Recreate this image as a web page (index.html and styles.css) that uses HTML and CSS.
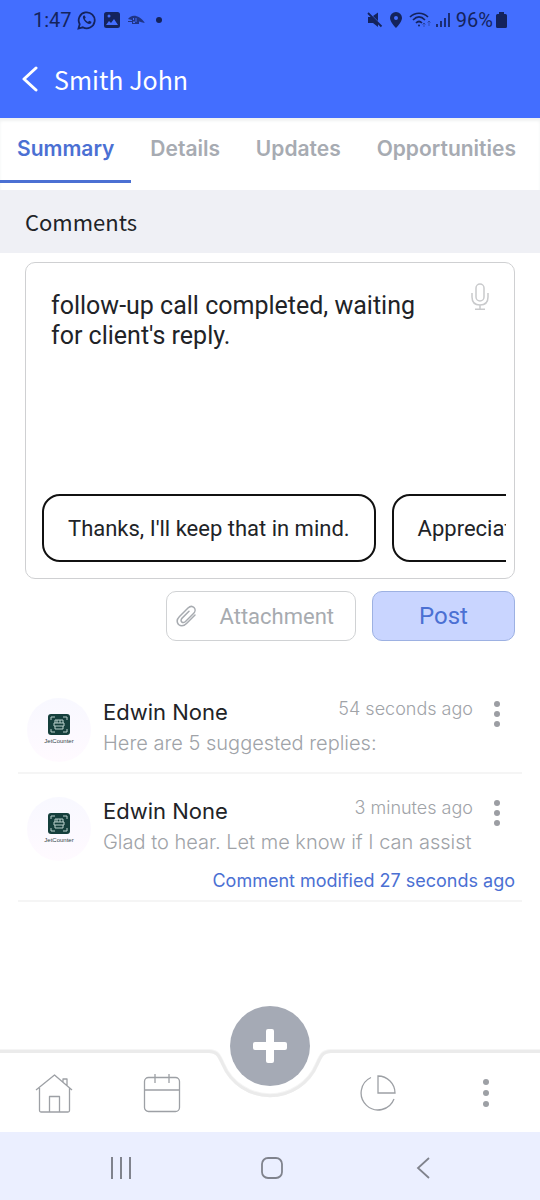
FILE: index.html
```html
<!DOCTYPE html>
<html lang="en">
<head>
<meta charset="utf-8">
<meta name="viewport" content="width=device-width, initial-scale=1">
<title>Smith John</title>
<link rel="stylesheet" href="styles.css">
</head>
<body>
<div class="app">
  <header class="top">
    <div class="status">
      <span class="clock">1:47</span>
      <svg class="whatsapp" width="20" height="20" viewBox="0 0 20 20" fill="none" stroke="currentColor" stroke-width="1.8"><path d="M1.5 18.5l1.2-4.3a8 8 0 1 1 3.1 3.1z"/><path d="M6.8 5.5c-1.300 1-1.200 2.600.4 4.900 1.900 2.700 4.300 4 6 3.400 1-.4 1.300-1.200 1.200-2l-2.300-1.100-1.100 1.200c-1.500-.6-2.600-1.800-3.200-3.100l.9-1-.9-2.200z" fill="currentColor" stroke="none"/></svg>
      <svg width="16" height="16" viewBox="0 0 16 16"><path fill="currentColor" fill-rule="evenodd" d="M2.500 0h11A2.500 2.500 0 0 1 16 2.500v11a2.500 2.500 0 0 1-2.500 2.500h-11A2.500 2.500 0 0 1 0 13.500v-11A2.500 2.500 0 0 1 2.500 0zM2 13h12l-4-6-3 4-2-2zM3.500 4a1.500 1.500 0 1 0 3 0 1.500 1.500 0 1 0-3 0z"/></svg>
      <svg width="18" height="12" viewBox="0 0 18 12"><path fill="currentColor" opacity=".75" fill-rule="evenodd" d="M1 5C4 0 12 0 18 9L12 7.500V10H5V8H1V7h4V6zM6 4v2h1V4zM8.500 4v4h1V4zM6 7.500V9h2V7.500z"/></svg>
      <svg class="more-dot" width="6" height="6" viewBox="0 0 6 6"><circle cx="3" cy="3" r="3" fill="currentColor"/></svg>
      <span class="spacer"></span>
      <svg width="16" height="16" viewBox="0 0 16 16"><path fill="currentColor" d="M1 5h4l6 6v4l-5-4H1zM6 4l5-3.500V9z"/><path d="M1 1l13.500 13.500" stroke="currentColor" stroke-width="1.800"/></svg>
      <svg width="12" height="16" viewBox="0 0 12 16"><path fill="currentColor" fill-rule="evenodd" d="M6 0a6 6 0 0 1 6 6c0 4-6 10-6 10S0 10 0 6a6 6 0 0 1 6-6zM4 6a2 2 0 1 0 4 0 2 2 0 1 0-4 0z"/></svg>
      <svg class="wifi" width="22" height="16" viewBox="0 0 22 16" fill="none" stroke="currentColor" stroke-width="1.700"><path d="M1 5c5-5 13-5 18 0M4 8c4-4 8-4 12 0M7 11c2-2 4-2 6 0"/><circle cx="10" cy="13.500" r="1" fill="currentColor" stroke="none"/><path d="M15 15v-4M20 9v5M13.500 12.500L15 11l1.500 1.500M18.500 10.500L20 9l1.500 1.500" stroke-width="1" opacity=".45"/></svg>
      <svg width="14" height="16" viewBox="0 0 14 16"><path stroke="currentColor" stroke-width="1.700" d="M1 12v3M5 9v6M9 6v9M13 1v14"/></svg>
      <span class="battery-text">96%</span>
      <svg width="11" height="16" viewBox="0 0 11 16"><path fill="currentColor" d="M3 0h5v2h1.500A1.500 1.500 0 0 1 11 3.500v11A1.500 1.500 0 0 1 9.500 16h-8A1.500 1.500 0 0 1 0 14.500v-11A1.500 1.500 0 0 1 1.500 2H3z"/></svg>
    </div>
    <div class="title-bar">
      <button class="icon-button back" aria-label="Back"><svg width="16" height="26" viewBox="0 0 16 26" fill="none" stroke="currentColor" stroke-width="3" stroke-linecap="round" stroke-linejoin="round"><path d="M14 2L2 13l12 11"/></svg></button>
      <h1>Smith John</h1>
    </div>
  </header>

  <nav class="tabs" aria-label="Sections">
    <a class="tab active" href="#summary" aria-current="page">Summary</a>
    <a class="tab" href="#details">Details</a>
    <a class="tab" href="#updates">Updates</a>
    <a class="tab" href="#opportunities">Opportunities</a>
  </nav>

  <main id="summary">
    <h2 class="section-title"><label for="comment">Comments</label></h2>
    <form class="composer">
      <div class="editor">
        <div class="entry">
          <textarea id="comment">follow-up call completed, waiting for client's reply.</textarea>
          <button type="button" class="icon-button mic" aria-label="Dictate"><svg width="18" height="28" viewBox="0 0 18 28" fill="none" stroke="currentColor" stroke-width="1.500"><rect x="5" y="1" width="8" height="17" rx="4"/><path d="M1 10v4c0 5 3 8 8 8s8-3 8-8v-4M9 22v4M4 26.200h10"/></svg></button>
        </div>
        <div class="replies">
          <button type="button" class="reply">Thanks, I'll keep that in mind.</button>
          <button type="button" class="reply">Appreciate it.</button>
        </div>
      </div>
      <div class="actions">
        <button type="button" class="action attach"><svg width="22" height="22" viewBox="0 0 22 22" fill="none" stroke="currentColor" stroke-width="1.500" stroke-linecap="round"><path d="M20 10l-8.500 8.500c-2.500 2.500-5.500 3-8 1-2-2.500-1.500-5.500 1-8L13 3c2-2 4.500-2 6-.5s1.500 4-.5 6l-8 8c-1.200 1.200-2.800 1.400-3.800.4s-.8-2.600.4-3.800L14 6.200"/></svg><span>Attachment</span></button>
        <button type="button" class="action post">Post</button>
      </div>
    </form>

    <ul class="comments">
      <li class="comment">
        <svg class="avatar" width="64" height="64" viewBox="0 0 64 64"><defs><linearGradient id="disc" x1="0" y1="0" x2="0" y2="1"><stop offset="0" stop-color="#f8f8ff"/><stop offset="1" stop-color="#fffaff"/></linearGradient></defs><circle cx="32" cy="32" r="32" fill="url(#disc)"/><g id="jet"><rect x="21" y="16" width="22" height="21" rx="3" fill="#153f3c"/><path d="M24 22v-3h4M36 19h4v3M24 31v3h4M36 34h4v-3" fill="none" stroke="#b9cfca"/><path d="M28 22h8v3h1v3h-1v3h-8v-3h-1v-3h1zM28 25h8M28 28h8M30 22v3M33 22v3" fill="none" stroke="#b9cfca"/></g><text x="32" y="45" class="brand">JetCounter</text></svg>
        <div class="body">
          <div class="meta"><h3>Edwin None</h3><time>54 seconds ago</time></div>
          <p>Here are 5 suggested replies:</p>
        </div>
        <button class="icon-button kebab" aria-label="Comment options"><svg width="6" height="26" viewBox="0 0 6 26" fill="currentColor"><circle cx="3" cy="3" r="3"/><circle cx="3" cy="13" r="3"/><circle cx="3" cy="23" r="3"/></svg></button>
      </li>
      <li class="comment">
        <svg class="avatar" width="64" height="64" viewBox="0 0 64 64"><circle cx="32" cy="32" r="32" fill="url(#disc)"/><use href="#jet"/><text x="32" y="45" class="brand">JetCounter</text></svg>
        <div class="body">
          <div class="meta"><h3>Edwin None</h3><time>3 minutes ago</time></div>
          <p>Glad to hear. Let me know if I can assist</p>
        </div>
        <button class="icon-button kebab" aria-label="Comment options"><svg width="6" height="26" viewBox="0 0 6 26" fill="currentColor"><circle cx="3" cy="3" r="3"/><circle cx="3" cy="13" r="3"/><circle cx="3" cy="23" r="3"/></svg></button>
        <div class="modified">Comment modified 27 seconds ago</div>
      </li>
    </ul>
  </main>

  <footer class="bottom">
    <nav class="dock" aria-label="Main">
      <a href="#home" aria-label="Home"><svg width="38" height="40" viewBox="0 0 38 40" fill="none" stroke="currentColor" stroke-width="1.300" stroke-linejoin="round"><path d="M1 17L19.500 2 37 17M4.500 15v22.500a1.500 1.500 0 0 0 1.500 1.500h27a1.500 1.500 0 0 0 1.500-1.500V15M14.500 39V23.500h10V39M28 9V6h4v7"/></svg></a>
      <a href="#calendar" aria-label="Calendar"><svg width="38" height="40" viewBox="0 0 38 40" fill="none" stroke="currentColor" stroke-width="1.300"><rect x="1.500" y="4.500" width="35" height="34" rx="4"/><path d="M2 17h34.500M12 1v9M26 1v9"/></svg></a>
      <div class="centre">
        <svg class="notch" width="140" height="64" viewBox="0 0 140 64" fill="none"><path d="M8 8H132V15H8z" fill="#fff"/><path d="M0 12H9C17 12 19 16 23 25A51 51 0 0 0 117 25C121 16 123 12 131 12H140" stroke="#f5f5f5" stroke-width="4"/><path d="M0 12.500H9C17 12.500 19 16.500 23 25.500A51 51 0 0 0 117 25.500C121 16.500 123 12.500 131 12.500H140" stroke="#ebebeb" stroke-width="3"/></svg>
        <button class="add" aria-label="Add"><svg width="34" height="34" viewBox="0 0 34 34" fill="#fff"><rect y="13" width="34" height="8" rx="2"/><rect x="13" width="8" height="34" rx="2"/></svg></button>
      </div>
      <a href="#reports" aria-label="Reports"><svg width="36" height="36" viewBox="0 0 36 36" fill="none" stroke="currentColor" stroke-width="1.300"><path d="M11 2.500A17 17 0 1 0 34 24M18 1v17h17A17 17 0 0 0 18 1z"/></svg></a>
      <a href="#more" aria-label="More"><svg width="6" height="28" viewBox="0 0 6 28" fill="currentColor"><circle cx="3" cy="3" r="3"/><circle cx="3" cy="14" r="3"/><circle cx="3" cy="25" r="3"/></svg></a>
    </nav>
    <div class="system">
      <button class="icon-button" aria-label="Recent apps"><svg width="22" height="22" viewBox="0 0 22 22" stroke="currentColor" stroke-width="2"><path d="M2 0v22M11 0v22M20 0v22"/></svg></button>
      <button class="icon-button" aria-label="Home screen"><svg width="22" height="22" viewBox="0 0 22 22" fill="none" stroke="currentColor" stroke-width="1.800"><rect x="1" y="1" width="20" height="20" rx="6"/></svg></button>
      <button class="icon-button" aria-label="System back"><svg width="22" height="22" viewBox="0 0 22 22" fill="none" stroke="currentColor" stroke-width="1.800"><path d="M17 1L6 11l11 10"/></svg></button>
    </div>
  </footer>
</div>
</body>
</html>
```
FILE: styles.css
```css
* { box-sizing: border-box; }
body, h1, h2, h3, p, ul { margin: 0; padding: 0; }
body { background: #fff; font-family: Roboto, sans-serif; color: #212327; }
button, textarea { font: inherit; color: inherit; }
button { cursor: pointer; }
a { color: inherit; text-decoration: none; }
svg { display: block; flex: none; }
h1, h2, h3 { font-weight: 400; }
.icon-button { display: flex; border: 0; padding: 0; background: none; }
.app { display: flex; flex-direction: column; min-height: 100vh; }
main { flex: 1; }

.top { background: #436eff; color: #fff; }
.status { display: flex; align-items: center; gap: 7px; height: 40px; padding: 0 33px; color: #14235c; font-size: 20px; }
.clock { margin-right: -2px; }
.spacer { flex: 1; }
.wifi { margin-right: -2px; }
.more-dot { margin-left: 4px; }
.battery-text { margin: 0 -4px 0 -1px; }
.title-bar { display: flex; align-items: center; gap: 16px; height: 78px; padding: 0 22px; }
.title-bar h1 { font-family: "Noto Sans CJK JP", sans-serif; font-size: 25px; line-height: 36px; }

.tabs { display: flex; justify-content: space-between; height: 72px; padding-right: 7px; box-shadow: inset 0 3px 3px #f0f2f2; }
.tab { height: 65px; padding: 19px 17px 0; font: 600 21px/24px Inter, sans-serif; color: #a7abb2; }
.tab.active { color: #4b70d3; border-bottom: 3px solid #4b70d3; }

.section-title { background: #eff0f5; padding: 16px 25px; font: 22px/31px "Noto Sans CJK JP", sans-serif; }
.composer { padding: 9px 25px 0; }
.editor { border: 1px solid #cfd0d2; border-radius: 10px; padding: 20px 8px 16px 16px; }
.entry { display: flex; align-items: flex-start; justify-content: space-between; padding-right: 17px; }
.entry textarea { flex: 1; min-width: 0; height: 211px; border: 0; outline: 0; resize: none; padding: 8px 40px 8px 9px; font-size: 25px; line-height: 30px; background: none; }
.mic { color: #c9cacc; }
.replies { display: flex; gap: 16px; overflow: hidden; }
.reply { flex: none; height: 68px; padding: 0 24px; border: 2px solid #111; border-radius: 18px; background: #fff; font-size: 22px; }
.actions { display: flex; justify-content: flex-end; gap: 16px; padding-top: 12px; }
.action { height: 50px; border: 1px solid #d0d2d4; border-radius: 10px; background: #fff; }
.attach { display: flex; align-items: center; gap: 23px; padding: 0 21px 0 8px; color: #a7abb0; font-size: 22px; }
.post { width: 143px; background: #c9d5ff; border-color: #9db1e2; color: #4b70d3; font-size: 24px; }

.comments { list-style: none; margin: 38px 18px 0; font-family: Inter, sans-serif; font-weight: 300; }
.comment { display: grid; grid-template-columns: 64px 1fr 6px; column-gap: 12px; padding: 19px 22px 10px 9px; border-bottom: 2px solid #f5f5f5; }
.comment + .comment { padding-top: 23px; }
.brand { font: 6px "Liberation Sans", sans-serif; fill: #33484b; text-anchor: middle; }
.body { padding-right: 9px; }
.meta { display: flex; justify-content: space-between; align-items: flex-start; }
.meta h3 { font-size: 22px; line-height: 28px; }
.meta time { font-size: 18px; line-height: 22px; color: #a0a3a8; }
.body p { font-size: 20px; line-height: 34px; color: #a0a3a8; white-space: nowrap; }
.kebab { color: #9c9ea3; align-self: start; margin-top: 3px; }
.modified { grid-column: 1 / -1; text-align: right; font-size: 18px; line-height: 24px; padding-top: 8px; margin-right: -15px; margin-bottom: -3px; color: #4b70d3; font-weight: 400; }

.bottom { position: sticky; bottom: 0; }
.dock { display: grid; grid-template-columns: repeat(5, 1fr); height: 82px; align-items: center; justify-items: center; background: #fff; border-top: 3px solid #ebebeb; box-shadow: 0 -1px 0 #f5f5f5; color: #9da0a5; }
.centre { position: relative; width: 80px; height: 100%; }
.notch { position: absolute; left: -30px; top: -14px; }
.add { position: absolute; left: 0; top: -47px; width: 80px; height: 80px; border: 0; border-radius: 50%; padding: 23px; background: #a5aab5; }
.system { display: grid; grid-template-columns: repeat(3, 151px); justify-content: center; justify-items: center; align-items: center; height: 68px; padding: 4px 0 0 4px; background: #ebefff; color: #80838d; }
```
